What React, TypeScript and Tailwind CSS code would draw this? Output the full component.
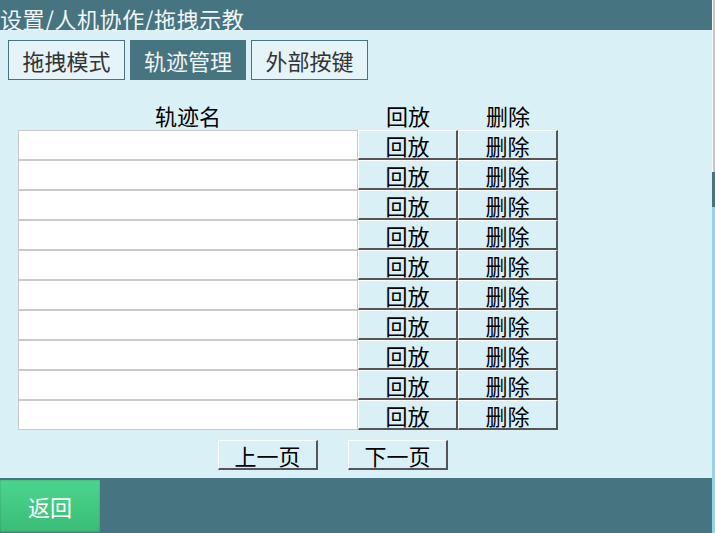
import React from 'react';

const FONT = { fontFamily: '"Noto Sans CJK SC", "Noto Sans", sans-serif' };

const TABS = [
  { label: '拖拽模式', w: 'w-[117px]' },
  { label: '轨迹管理', w: 'w-[116px]' },
  { label: '外部按键', w: 'w-[117px]' },
];
const ROWS = Array.from({ length: 10 }, (_, i) => i);

function RaisedButton({ label, className = '' }: { label: string; className?: string }) {
  return (
    <button
      type="button"
      className={`flex items-center justify-center bg-[#daf0f7] text-black text-[22px] leading-none border-t border-l border-t-white border-l-white border-b-2 border-r-2 border-b-[#555] border-r-[#555] ${className}`}
    >
      {label}
    </button>
  );
}

export default function App() {
  const active = 1;

  return (
    <div className="flex w-[715px] h-[533px] overflow-hidden bg-[#daf0f7]" style={FONT}>
      <div className="flex flex-col w-[712px] h-full">
        {/* Title bar */}
        <div className="h-[30px] bg-[#477481] text-[#f2f6f7] text-[22px] leading-[22px] pt-[7px] tracking-[0.6px] whitespace-nowrap">
          设置/人机协作/拖拽示教
        </div>

        {/* Content */}
        <div className="flex-1 flex flex-col">
          <div className="flex gap-[5px] pl-[8px] pt-[10px]">
            {TABS.map((t, i) => (
              <div
                key={t.label}
                className={`h-[40px] ${t.w} flex items-center justify-center border border-[#477481] text-[22px] leading-none ${
                  i === active ? 'bg-[#477481] text-[#f4f4f4]' : 'bg-[#e5f4f9] text-[#333]'
                }`}
              >
                {t.label}
              </div>
            ))}
          </div>

          {/* Table */}
          <div className="pl-[18px] pt-[20px]">
            <div className="flex h-[30px] items-center text-[22px] leading-none text-black">
              <div className="w-[340px] text-center">轨迹名</div>
              <div className="w-[100px] text-center">回放</div>
              <div className="w-[100px] text-center">删除</div>
            </div>
            {ROWS.map((r) => (
              <div key={r} className="flex h-[30px]">
                <div className="w-[340px] h-full bg-white border border-[#c9c9c9]" />
                <RaisedButton label="回放" className="w-[100px] h-full" />
                <RaisedButton label="删除" className="w-[100px] h-full" />
              </div>
            ))}
          </div>

          {/* Pager */}
          <div className="flex gap-[30px] pl-[218px] pt-[10px]">
            <RaisedButton label="上一页" className="w-[100px] h-[30px]" />
            <RaisedButton label="下一页" className="w-[100px] h-[30px]" />
          </div>
        </div>

        {/* Footer */}
        <div className="h-[55px] bg-[#477481] flex items-center">
          <button
            type="button"
            className="w-[100px] h-[52px] mt-[1px] bg-gradient-to-b from-[#4bd58e] to-[#3abd76] text-white text-[22px] leading-none shadow-[inset_0_0_2px_rgba(0,0,0,0.25)]"
          >
            返回
          </button>
        </div>
      </div>

      {/* scroll strip */}
      <div className="w-[3px] h-full flex flex-col">
        <div className="h-[172px] border-l border-[#eef6f9] bg-[#c9c9c9]" />
        <div className="h-[35px] bg-[#477481]" />
        <div className="flex-1 bg-[#8fd6e6]" />
      </div>
    </div>
  );
}
